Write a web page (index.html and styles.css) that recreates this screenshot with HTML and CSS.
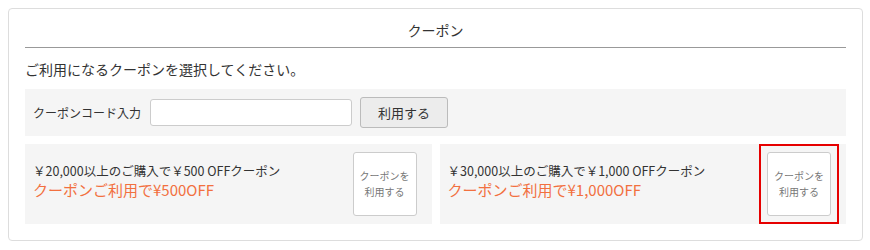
FILE: index.html
```html
<!DOCTYPE html>
<html lang="ja">
<head>
    <meta charset="UTF-8">
    <title>クーポン</title>
    <link rel="stylesheet" href="styles.css">
</head>
<body>
    <div class="coupon-panel">
        <h2 class="panel-title">クーポン</h2>
        <p class="lead">ご利用になるクーポンを選択してください。</p>

        <div class="code-row">
            <label for="coupon-code">クーポンコード入力</label>
            <input type="text" id="coupon-code">
            <button class="code-button">利用する</button>
        </div>

        <div class="coupon-list">
            <div class="coupon-card">
                <div class="coupon-text">
                    <div class="coupon-name">￥20,000以上のご購入で￥500 OFFクーポン</div>
                    <div class="coupon-discount">クーポンご利用で¥500OFF</div>
                </div>
                <button class="use-button">クーポンを<br>利用する</button>
            </div>
            <div class="coupon-card">
                <div class="coupon-text">
                    <div class="coupon-name">￥30,000以上のご購入で￥1,000 OFFクーポン</div>
                    <div class="coupon-discount">クーポンご利用で¥1,000OFF</div>
                </div>
                <div class="selected-frame">
                    <button class="use-button">クーポンを<br>利用する</button>
                </div>
            </div>
        </div>
    </div>
</body>
</html>
```

FILE: styles.css
```css
body, html {
    margin: 0;
    padding: 0;
    background: #fff;
    font-family: "Noto Sans CJK JP", "Noto Sans", sans-serif;
    color: #333;
}

body {
    padding: 8px 7px 8px 8px;
}

.coupon-panel {
    border: 1px solid #ddd;
    border-radius: 4px;
    padding: 0 16px 16px;
}

.panel-title {
    margin: 0;
    padding: 10px 0 6px;
    font-size: 14px;
    font-weight: normal;
    line-height: 22px;
    text-align: center;
    border-bottom: 1px solid #999;
}

.lead {
    margin: 10px 0 9px;
    font-size: 14px;
    line-height: 22px;
}

.code-row {
    display: flex;
    align-items: center;
    background: #f5f5f5;
    padding: 8px;
}

.code-row label {
    font-size: 12px;
    margin-right: 9px;
}

.code-row input {
    width: 202px;
    height: 27px;
    box-sizing: border-box;
    border: 1px solid #ccc;
    border-radius: 3px;
    background: #fff;
    margin-right: 8px;
}

.code-button {
    width: 88px;
    height: 31px;
    border: 1px solid #bbb;
    border-radius: 3px;
    background: #ececec;
    font-family: inherit;
    font-size: 13px;
    color: #333;
}

.coupon-list {
    display: grid;
    grid-template-columns: 1fr 1fr;
    gap: 8px;
    margin-top: 8px;
}

.coupon-card {
    display: flex;
    align-items: center;
    justify-content: space-between;
    background: #f5f5f5;
    padding: 8px 15px 8px 8px;
    height: 64px;
}

.coupon-text {
    margin-top: -6px;
}

.coupon-name {
    font-size: 12.5px;
    line-height: 18px;
}

.coupon-discount {
    font-size: 15px;
    line-height: 20px;
    color: #f2703f;
}

.use-button {
    width: 64px;
    height: 64px;
    border: 1px solid #ccc;
    border-radius: 3px;
    background: #fff;
    font-family: inherit;
    font-size: 10px;
    line-height: 16px;
    color: #777;
    padding: 0;
}

.selected-frame {
    display: flex;
    margin: -8px;
    padding: 6px;
    border: 2px solid #e60000;
}
```
